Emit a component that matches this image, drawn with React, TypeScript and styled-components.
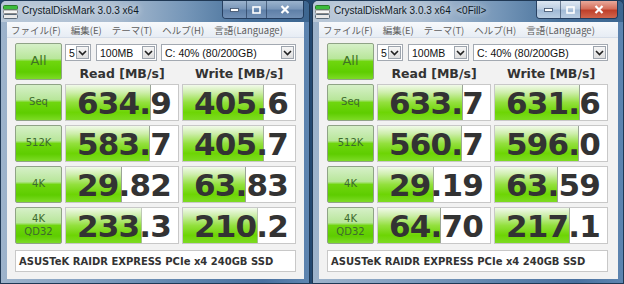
import React from "react";
import styled, { createGlobalStyle } from "styled-components";

const GlobalStyle = createGlobalStyle`
  html, body {
    margin: 0;
    padding: 0;
    overflow: hidden;
    background: #22476f;
  }
  body {
    font-family: "Liberation Sans", "Noto Sans CJK JP", sans-serif;
  }
`;

const Desktop = styled.div`
  display: flex;
  gap: 2px;
  width: 624px;
  height: 284px;
`;

const Frame = styled.div<{ $w: number }>`
  width: ${(p) => p.$w}px;
  height: 284px;
  box-sizing: border-box;
  display: flex;
  flex-direction: column;
  border: 1px solid #1f3854;
  border-radius: 6px 6px 0 0;
  padding: 0 5px 4px 6px;
  background: linear-gradient(90deg, #9db3cb 0%, #86a2c2 25%, #5f84ad 60%, #4a71a0 85%, #5e85b0 100%);
`;

const TitleBar = styled.div`
  height: 21px;
  display: flex;
  align-items: flex-start;
  margin: 0 -5px 0 -6px;
  padding-left: 2px;
  background: linear-gradient(90deg, #b9c8d8 0%, #aebfd2 35%, #7596b8 60%, #46709a 80%, #3d6690 100%);
  border-radius: 5px 5px 0 0;
`;

const AppIcon = styled.svg`
  margin-top: 4px;
  flex: none;
`;

const Title = styled.span`
  margin: 4px 0 0 4px;
  font: 10px "Liberation Sans", sans-serif;
  color: #0f1a26;
  text-shadow: 0 0 6px rgba(255, 255, 255, 0.9);
  white-space: pre;
  flex: 1;
`;

const Caption = styled.div`
  display: flex;
  height: 17px;
  margin-right: 5px;
  border: 1px solid rgba(25, 45, 75, 0.75);
  border-top: none;
  border-radius: 0 0 4px 4px;
  overflow: hidden;
`;

const CapButton = styled.div<{ $w: number; $kind: "plain" | "close"; $active: boolean }>`
  width: ${(p) => p.$w}px;
  display: flex;
  align-items: center;
  justify-content: center;
  box-sizing: border-box;
  border-left: 1px solid rgba(25, 45, 75, 0.55);
  &:first-child {
    border-left: none;
  }
  background: ${(p) =>
    p.$kind === "close" && p.$active
      ? "linear-gradient(180deg, #e9a99b 0%, #d5705c 45%, #c0402a 55%, #d2664d 100%)"
      : p.$active
      ? "linear-gradient(180deg, #dde7f2 0%, #c0d1e4 45%, #a1bad6 55%, #b9cde2 100%)"
      : "linear-gradient(180deg, #9bb3cd 0%, #7b98ba 45%, #5f80a8 55%, #7391b6 100%)"};
`;

const MenuBar = styled.div`
  height: 16px;
  display: flex;
  align-items: center;
  gap: 10px;
  padding-left: 4px;
  background: linear-gradient(180deg, #f7f9fc 0%, #e7edf4 100%);
  border-bottom: 1px solid #d5dde8;
  box-sizing: border-box;
  font: 9.5px "Noto Sans CJK JP", sans-serif;
  color: #5e5e5e;
  white-space: nowrap;
`;

const Client = styled.div`
  flex: 1;
  background: #f2f2f2;
`;

const Board = styled.div`
  display: grid;
  grid-template-columns: 47px 114px 114px;
  grid-template-rows: repeat(5, 37px);
  column-gap: 3px;
  row-gap: 4px;
  padding: 5px 0 0 8px;
`;

const GreenButton = styled.div<{ $big?: boolean }>`
  box-sizing: border-box;
  border: 1px solid #8fa386;
  border-radius: 2px;
  display: flex;
  flex-direction: column;
  align-items: center;
  justify-content: center;
  background: linear-gradient(180deg, #d6f0c8 0%, #b8e69a 42%, #6fd60e 50%, #5ecd00 80%, #7ddb26 100%);
  font: ${(p) => (p.$big ? "13px" : "10px")} "DejaVu Sans", sans-serif;
  line-height: 1.25;
  color: ${(p) => (p.$big ? "#3f7424" : "#3d6a2e")};
`;

const TopPanel = styled.div`
  grid-column: 2 / span 2;
  display: flex;
  flex-direction: column;
`;

const ComboRow = styled.div`
  display: flex;
  margin-top: 1px;
  height: 17px;
`;

const Combo = styled.div<{ $w: number; $gap: number }>`
  width: ${(p) => p.$w}px;
  margin-right: ${(p) => p.$gap}px;
  height: 17px;
  box-sizing: border-box;
  border: 1px solid #a3a9b1;
  background: #fff;
  display: flex;
  align-items: center;
  padding: 0 1px 0 3px;
  font: 10.5px "Liberation Sans", sans-serif;
  color: #111;
`;

const ComboText = styled.span`
  flex: 1;
  white-space: nowrap;
`;

const ComboArrow = styled.span`
  width: 13px;
  height: 13px;
  box-sizing: border-box;
  border: 1px solid #9da4ad;
  background: linear-gradient(180deg, #f6f6f6 0%, #dedede 100%);
  display: flex;
  align-items: center;
  justify-content: center;
`;

const HeadRow = styled.div`
  display: grid;
  grid-template-columns: 114px 114px;
  column-gap: 3px;
  margin-top: 5px;
`;

const Head = styled.div`
  text-align: center;
  font: bold 12.5px "DejaVu Sans", sans-serif;
  color: #333;
  white-space: nowrap;
`;

const Cell = styled.div`
  box-sizing: border-box;
  border: 1px solid #c8c8c8;
  background-color: #fff;
  background-image: linear-gradient(to left, #9aa596 1px, transparent 1px),
    linear-gradient(180deg, #f1faea 0%, #cdeeaa 22%, #93e03e 50%, #6dd504 78%, #7ddb22 100%);
  background-repeat: no-repeat;
  display: flex;
  align-items: center;
  justify-content: flex-end;
  padding-right: 7px;
  font: bold 31px "DejaVu Sans", sans-serif;
  letter-spacing: -0.8px;
  color: #333;
`;

const DriveBar = styled.div`
  grid-column: 1 / span 3;
  height: 22px;
  margin-top: 2px;
  box-sizing: border-box;
  border: 1px solid #c8c8c8;
  background: #fff;
  display: flex;
  align-items: center;
  padding-left: 3px;
  font: bold 10px "DejaVu Sans", sans-serif;
  color: #333;
  white-space: nowrap;
`;

type Row = { label: string[]; read: string; write: string };

type Win = { title: string; active: boolean; width: number; rows: Row[] };

const windows: Win[] = [
  {
    title: "CrystalDiskMark 3.0.3 x64",
    active: false,
    width: 310,
    rows: [
      { label: ["Seq"], read: "634.9", write: "405.6" },
      { label: ["512K"], read: "583.7", write: "405.7" },
      { label: ["4K"], read: "29.82", write: "63.83" },
      { label: ["4K", "QD32"], read: "233.3", write: "210.2" }
    ]
  },
  {
    title: "CrystalDiskMark 3.0.3 x64  <0Fill>",
    active: true,
    width: 312,
    rows: [
      { label: ["Seq"], read: "633.7", write: "631.6" },
      { label: ["512K"], read: "560.7", write: "596.0" },
      { label: ["4K"], read: "29.19", write: "63.59" },
      { label: ["4K", "QD32"], read: "64.70", write: "217.1" }
    ]
  }
];

const menus = ["ファイル(F)", "編集(E)", "テーマ(T)", "ヘルプ(H)", "言語(Language)"];

// bar length is on a log scale
const barWidth = (v: string) => {
  const pct = (0.213 + 0.195 * Math.log10(parseFloat(v))) * 100;
  return `${pct}% 100%, ${pct}% 100%`;
};

const Chevron = () => (
  <svg width="9" height="6" viewBox="0 0 9 6">
    <path d="M1 1 L4.5 4.5 L8 1" fill="none" stroke="#222" strokeWidth="1.6" />
  </svg>
);

const DiskIcon = () => (
  <AppIcon width="15" height="14" viewBox="0 0 15 14">
    <rect x="0.5" y="0.5" width="14" height="4" rx="1" fill="#3cbc3c" stroke="#2a7a2a" />
    <rect x="0.5" y="5" width="14" height="3.5" rx="1" fill="#f6f6f6" stroke="#8a8a8a" />
    <rect x="0.5" y="9.5" width="14" height="4" rx="1" fill="#e8e8e8" stroke="#5a6a78" />
  </AppIcon>
);

const CaptionButtons: React.FC<{ active: boolean }> = ({ active }) => (
  <Caption>
    <CapButton $w={23} $kind="plain" $active={active}>
      <svg width="9" height="4">
        <rect x="0.5" y="0.5" width="8" height="3" fill="#fff" stroke="#3a4d66" strokeWidth="0.8" />
      </svg>
    </CapButton>
    <CapButton $w={20} $kind="plain" $active={active}>
      <svg width="9" height="8">
        <rect x="1" y="1" width="7" height="6" fill="none" stroke="#fff" strokeWidth="1.6" />
      </svg>
    </CapButton>
    <CapButton $w={37} $kind="close" $active={active}>
      <svg width="10" height="9" viewBox="0 0 10 9">
        <path d="M1.5 1 L8.5 8 M8.5 1 L1.5 8" stroke="#fff" strokeWidth="2.2" />
      </svg>
    </CapButton>
  </Caption>
);

const DiskMarkWindow: React.FC<{ win: Win }> = ({ win }) => (
  <Frame $w={win.width}>
    <TitleBar>
      <DiskIcon />
      <Title>{win.title}</Title>
      <CaptionButtons active={win.active} />
    </TitleBar>
    <MenuBar>
      {menus.map((m) => (
        <span key={m}>{m}</span>
      ))}
    </MenuBar>
    <Client>
      <Board>
        <GreenButton $big>All</GreenButton>
        <TopPanel>
          <ComboRow>
            <Combo $w={26} $gap={5}>
              <ComboText>5</ComboText>
              <ComboArrow>
                <Chevron />
              </ComboArrow>
            </Combo>
            <Combo $w={61} $gap={4}>
              <ComboText>100MB</ComboText>
              <ComboArrow>
                <Chevron />
              </ComboArrow>
            </Combo>
            <Combo $w={135} $gap={0}>
              <ComboText>C: 40% (80/200GB)</ComboText>
              <ComboArrow>
                <Chevron />
              </ComboArrow>
            </Combo>
          </ComboRow>
          <HeadRow>
            <Head>Read [MB/s]</Head>
            <Head>Write [MB/s]</Head>
          </HeadRow>
        </TopPanel>
        {win.rows.map((r) => (
          <React.Fragment key={r.label.join(" ")}>
            <GreenButton>
              {r.label.map((l) => (
                <span key={l}>{l}</span>
              ))}
            </GreenButton>
            <Cell style={{ backgroundSize: barWidth(r.read) }}>{r.read}</Cell>
            <Cell style={{ backgroundSize: barWidth(r.write) }}>{r.write}</Cell>
          </React.Fragment>
        ))}
        <DriveBar>ASUSTeK RAIDR EXPRESS PCIe x4 240GB SSD</DriveBar>
      </Board>
    </Client>
  </Frame>
);

const App: React.FC = () => (
  <>
    <GlobalStyle />
    <Desktop>
      {windows.map((w) => (
        <DiskMarkWindow key={w.title} win={w} />
      ))}
    </Desktop>
  </>
);

export default App;
